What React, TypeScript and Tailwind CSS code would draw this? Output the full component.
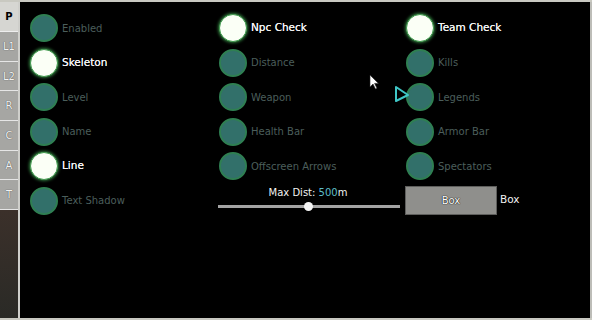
import React from 'react';

type Opt = { label: string; on?: boolean };

const col1: Opt[] = [
  { label: 'Enabled' },
  { label: 'Skeleton', on: true },
  { label: 'Level' },
  { label: 'Name' },
  { label: 'Line', on: true },
  { label: 'Text Shadow' },
];

const col2: Opt[] = [
  { label: 'Npc Check', on: true },
  { label: 'Distance' },
  { label: 'Weapon' },
  { label: 'Health Bar' },
  { label: 'Offscreen Arrows' },
];

const col3: Opt[] = [
  { label: 'Team Check', on: true },
  { label: 'Kills' },
  { label: 'Legends' },
  { label: 'Armor Bar' },
  { label: 'Spectators' },
];

const tabs = ['P', 'L1', 'L2', 'R', 'C', 'A', 'T'];

function Toggle({ label, on }: Opt) {
  return (
    <div className="flex items-center h-[28px]">
      {on ? (
        <div className="w-[28px] h-[28px] rounded-full bg-[#fbfff6] border border-[#3f9a4c] shadow-[0_0_3px_1px_#2f7a3c] shrink-0" />
      ) : (
        <div className="w-[28px] h-[28px] rounded-full bg-[#32706a] border-2 border-[#2f7f52] shrink-0" />
      )}
      <span
        className={
          on
            ? 'ml-[4px] text-[10.5px] text-[#f2f2f2] [text-shadow:0_0_0.5px_#ffffff] whitespace-nowrap'
            : 'ml-[4px] text-[10px] text-[#4b5e5b] whitespace-nowrap'
        }
      >
        {label}
      </span>
    </div>
  );
}

export default function App() {
  return (
    <div className="w-[592px] h-[320px] bg-black relative overflow-hidden font-['DejaVu_Sans',sans-serif]">
      <div className="h-[2px] bg-[#c9c9c1]" />
      <div className="flex h-[316px]">
        {/* side tabs */}
        <div className="w-[18px] flex flex-col">
          {tabs.map((t, i) => (
            <div
              key={t}
              className={
                i === 0
                  ? 'h-[30px] bg-[#d6d6d2] flex items-center justify-center text-[10px] font-bold text-black border-b border-[#eeeeee]'
                  : 'h-[29.7px] bg-[#a6a6a3] flex items-center justify-center text-[10px] text-[#f2f2f2] [text-shadow:0_0_1px_#222] border-b border-[#e6e6e6]'
              }
            >
              {t}
            </div>
          ))}
          <div className="flex-1 bg-gradient-to-b from-[#3b302a] to-[#2a2a26]" />
        </div>
        <div className="w-[2px] bg-[#cfcfcb]" />

        {/* panel */}
        <div className="flex-1 grid grid-cols-[189px_187px_1fr] pl-[10px] pt-[12px]">
          <div className="flex flex-col gap-[6.5px]">
            {col1.map((o) => (
              <Toggle key={o.label} {...o} />
            ))}
          </div>

          <div className="flex flex-col gap-[6.5px]">
            {col2.map((o) => (
              <Toggle key={o.label} {...o} />
            ))}
            <div className="w-[182px] -ml-[1px] flex flex-col items-center mt-0">
              <div className="text-[10px] text-[#f2f2f2] leading-[12px] ml-[-2px]">
                Max Dist: <span className="text-[#5cbdc9]">500</span>m
              </div>
              <div className="relative w-full h-[3px] bg-[#a3a3a3] mt-[6px]">
                <div className="absolute left-[86px] top-[-3px] w-[9px] h-[9px] rounded-full bg-[#f4f4f4]" />
              </div>
            </div>
          </div>

          <div className="flex flex-col gap-[6.5px]">
            {col3.map((o) => (
              <Toggle key={o.label} {...o} />
            ))}
            <div className="flex items-center -ml-[1px] mt-[-1px]">
              <div className="w-[92px] h-[29px] bg-[#8f8f8c] border border-[#5e5e5c] flex items-center justify-center text-[10px] text-white [text-shadow:0_0_1px_#000,0_0_1px_#000]">
                Box
              </div>
              <span className="ml-[3px] text-[10.5px] text-[#f2f2f2]">Box</span>
            </div>
          </div>
        </div>
        <div className="w-[2px] bg-[#bdbdb8]" />
      </div>
      <div className="h-[2px] bg-[#c9c9c1]" />

      {/* mouse cursor */}
      <svg className="absolute left-[369px] top-[74px]" width="11" height="16" viewBox="0 0 11 16">
        <path d="M1 1 L1 13 L4 10 L6.5 15 L8 14.3 L5.6 9.4 L9.5 9.4 Z" fill="#ffffff" stroke="#222" strokeWidth="0.6" />
      </svg>
      {/* triangle marker */}
      <svg className="absolute left-[394px] top-[85px]" width="16" height="18" viewBox="0 0 16 18">
        <path d="M2 2 L14 10 L2 16 Z" fill="none" stroke="#3fc6c6" strokeWidth="2" strokeLinejoin="round" />
      </svg>
    </div>
  );
}
